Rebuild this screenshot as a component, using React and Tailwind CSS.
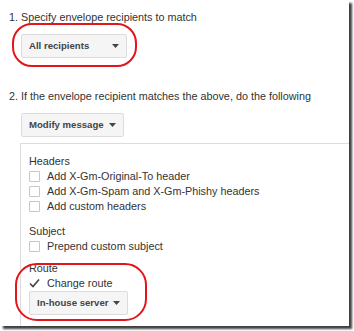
import React from "react";

const Arrow = () => (
  <svg width="7" height="4" viewBox="0 0 7 4" className="shrink-0">
    <path d="M0 0 L7 0 L3.5 4 Z" fill="#444" />
  </svg>
);

const Dropdown = ({ label, className = "" }) => (
  <div
    className={
      "inline-flex items-center whitespace-nowrap h-[24px] rounded-[2px] border border-[#dcdcdc] bg-[#f5f5f5] text-[#444] font-bold text-[9.6px] px-[7px] " +
      className
    }
  >
    {label}
  </div>
);

const Box = () => (
  <span className="w-[11px] h-[11px] border border-[#c6c6c6] rounded-[1px] bg-white shrink-0" />
);

const Row = ({ children, checked }) => (
  <div className="flex items-center h-[15px] gap-[7px]">
    {checked ? (
      <svg width="11" height="11" viewBox="0 0 11 11" className="shrink-0">
        <path d="M1 5.5 L4 8.5 L10 1.5" fill="none" stroke="#444" strokeWidth="1.6" />
      </svg>
    ) : (
      <Box />
    )}
    <span>{children}</span>
  </div>
);

export default function App() {
  return (
    <div
      className="relative w-[354px] h-[331px] bg-white overflow-hidden"
      style={{ fontFamily: '"Liberation Sans", Arial, sans-serif' }}
    >
      <div className="w-[349px] h-[326px] bg-white shadow-[3px_3px_2px_rgba(0,0,0,0.75)] overflow-hidden text-[#333] text-[10.8px]">
        <div className="pl-[9px] pt-[10px] leading-[15px]">1. Specify envelope recipients to match</div>
        <div className="pl-[21px] mt-[9px] leading-none">
          <Dropdown label={<><span>All recipients</span><span className="flex-1" /><Arrow /></>} className="w-[106px]" />
        </div>
        <div className="pl-[9px] mt-[31px] leading-[15px]">
          2. If the envelope recipient matches the above, do the following
        </div>
        <div className="pl-[21px] mt-[9px] leading-none">
          <Dropdown label={<><span>Modify message</span><span className="w-[5px]" /><Arrow /></>} />
        </div>
        <div className="ml-[20px] mt-[6px] border-t border-l border-[#dcdcdc] pl-[8px] pt-[10px] leading-[15px] h-[200px]">
          <div className="h-[15px]">Headers</div>
          <Row>Add X-Gm-Original-To header</Row>
          <Row>Add X-Gm-Spam and X-Gm-Phishy headers</Row>
          <Row>Add custom headers</Row>
          <div className="h-[15px] mt-[10px]">Subject</div>
          <Row>Prepend custom subject</Row>
          <div className="h-[15px] mt-[7px]">Route</div>
          <Row checked>Change route</Row>
          <div className="mt-0 leading-none">
            <Dropdown label={<><span>In-house server</span><span className="w-[5px]" /><Arrow /></>} className="h-[23px]" />
          </div>
        </div>
      </div>
      <div className="absolute left-[12px] top-[23px] w-[125px] h-[44px] border-[2.5px] border-[#e4141b] rounded-[20px]" />
      <div className="absolute left-[15px] top-[263px] w-[132px] h-[58px] border-[2.5px] border-[#e4141b] rounded-[22px]" />
    </div>
  );
}
